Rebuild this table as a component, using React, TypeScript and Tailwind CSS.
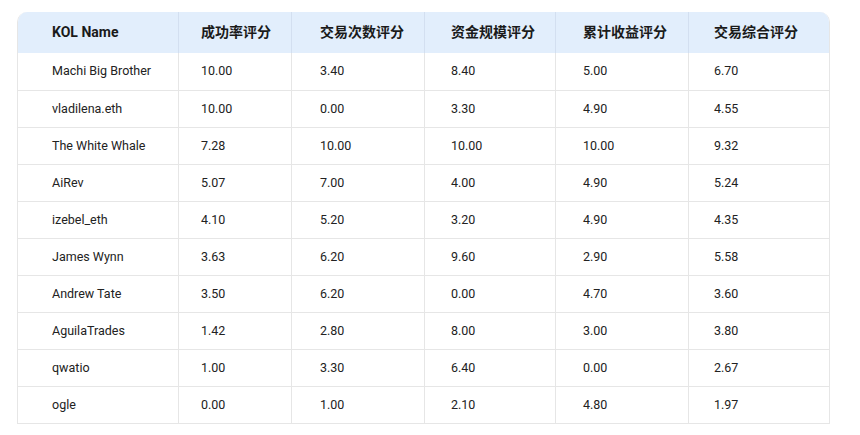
const headers = ['KOL Name', '成功率评分', '交易次数评分', '资金规模评分', '累计收益评分', '交易综合评分']

const rows: string[][] = [
  ['Machi Big Brother', '10.00', '3.40', '8.40', '5.00', '6.70'],
  ['vladilena.eth', '10.00', '0.00', '3.30', '4.90', '4.55'],
  ['The White Whale', '7.28', '10.00', '10.00', '10.00', '9.32'],
  ['AiRev', '5.07', '7.00', '4.00', '4.90', '5.24'],
  ['izebel_eth', '4.10', '5.20', '3.20', '4.90', '4.35'],
  ['James Wynn', '3.63', '6.20', '9.60', '2.90', '5.58'],
  ['Andrew Tate', '3.50', '6.20', '0.00', '4.70', '3.60'],
  ['AguilaTrades', '1.42', '2.80', '8.00', '3.00', '3.80'],
  ['qwatio', '1.00', '3.30', '6.40', '0.00', '2.67'],
  ['ogle', '0.00', '1.00', '2.10', '4.80', '1.97'],
]

// per-column left padding, measured from the screenshot
const pads = ['pl-[34px]', 'pl-[22px]', 'pl-[28px]', 'pl-[26px]', 'pl-[27px]', 'pl-[25px]']

const grid = 'grid grid-cols-[160px_113px_133px_131px_133px_141px]'

export default function App() {
  return (
    <div
      className="min-h-screen bg-white pt-[12px] pl-[17px]"
      style={{ fontFamily: 'Roboto, "Noto Sans CJK SC", sans-serif' }}
    >
      <div className="w-[813px] border border-[#e6e6e6] border-t-0 rounded-t-[10px] overflow-hidden">
        <div className={`${grid} h-[41px] bg-[#e2eefc]`}>
          {headers.map((h, i) => (
            <div
              key={h}
              className={`${pads[i]} flex items-center text-[14px] font-bold text-[#1a1a1a] ${i > 0 ? 'border-l border-[#d3dff0]' : ''}`}
            >
              {h}
            </div>
          ))}
        </div>
        {rows.map((r, ri) => (
          <div key={r[0]} className={`${grid} h-[37px] ${ri > 0 ? 'border-t border-[#e6e6e6]' : ''}`}>
            {r.map((c, i) => (
              <div
                key={i}
                className={`${pads[i]} flex items-center text-[12.5px] text-[#222] ${i > 0 ? 'border-l border-[#e6e6e6]' : ''}`}
              >
                {c}
              </div>
            ))}
          </div>
        ))}
      </div>
    </div>
  )
}
